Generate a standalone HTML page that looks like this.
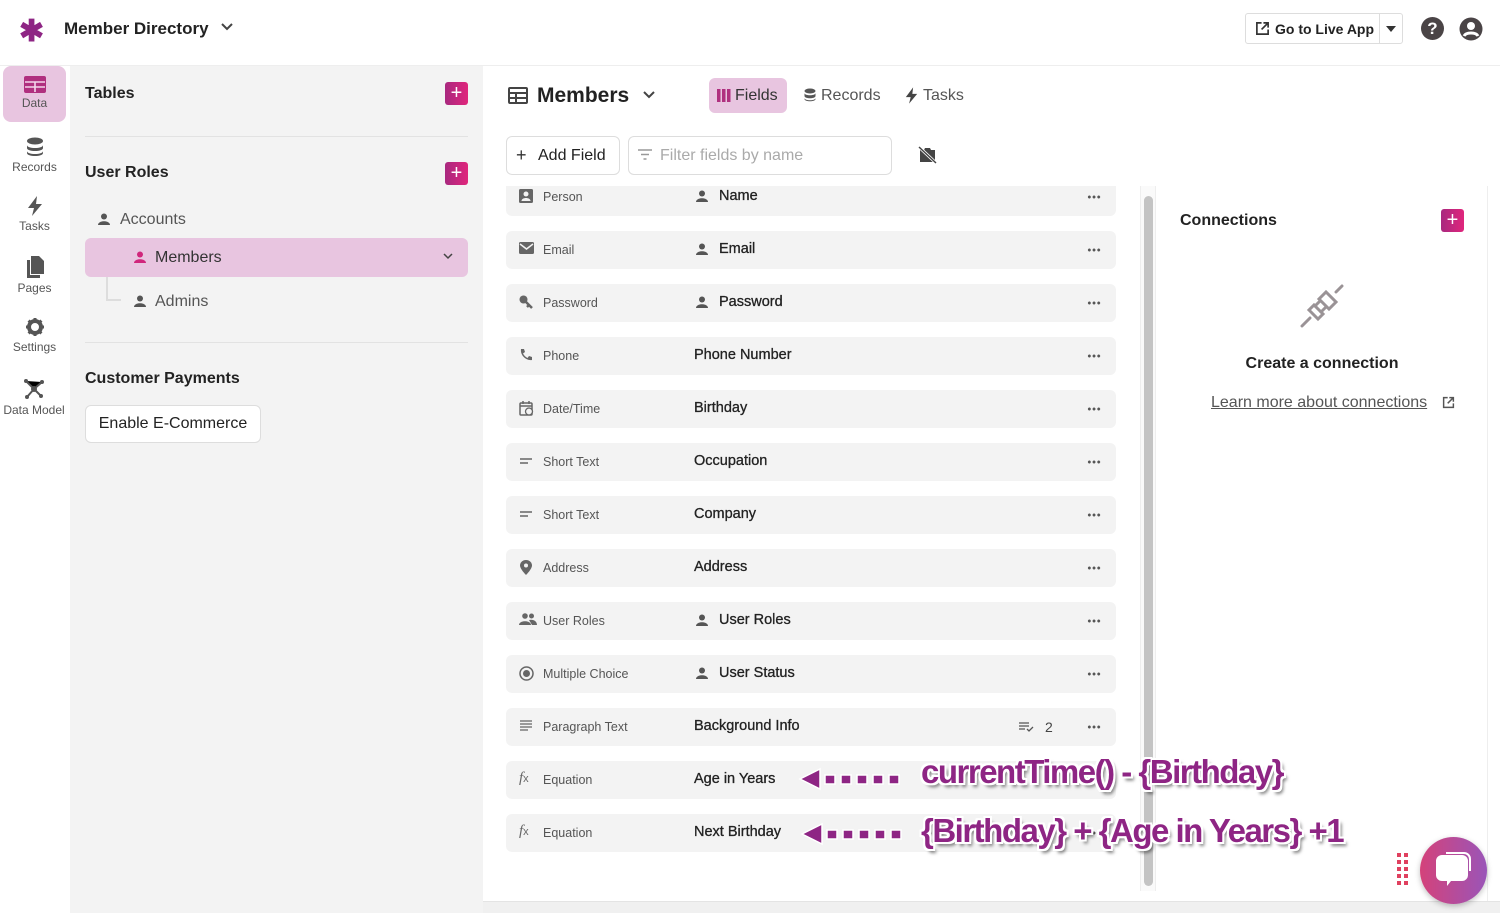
<!DOCTYPE html>
<html><head><meta charset="utf-8"><style>
*{box-sizing:border-box;margin:0;padding:0}
body{width:1500px;height:913px;overflow:hidden;background:#fff;font-family:"Liberation Sans",sans-serif;color:#222;position:relative}
.abs{position:absolute}
.top{left:0;top:0;width:1500px;height:66px;background:#fff;border-bottom:1px solid #eee}
.side{left:0;top:66px;width:70px;height:847px;background:#fff}
.nav{position:absolute;left:3px;width:63px;height:56px;text-align:center;font-size:12px;color:#555}
.nav svg{display:block;margin:10px auto 3px}
.panel{left:70px;top:66px;width:413px;height:847px;background:#f3f3f3}
.plus{position:absolute;width:23px;height:23px;border-radius:3px;background:linear-gradient(90deg,#a8287f,#e0267c);color:#fff;font-size:20px;line-height:22px;text-align:center}
.h{font-size:16px;font-weight:bold;color:#222}
.row{position:absolute;left:506px;width:610px;height:38px;background:#f3f3f3;border-radius:6px}
.row .t{position:absolute;left:37px;top:12px;font-size:12.5px;color:#555}
.row .n{position:absolute;left:188px;top:10px;font-size:14.5px;color:#222;-webkit-text-stroke:0.3px #222}
.row .n.p{left:213px}
.row .ic{position:absolute;left:13px;top:11px}
.row .pi{position:absolute;left:190px;top:12px}
.row .d{position:absolute;left:581px;top:17px;width:14px;height:4px;background:radial-gradient(circle,#555 1.3px,transparent 1.6px) 0 0/4.7px 4px repeat-x}
.ann{position:absolute;font-family:"Liberation Sans Narrow","Liberation Sans",sans-serif;font-weight:bold;font-size:33px;color:#8e2584;text-shadow:-2px -2px 0 #fff,2px -2px 0 #fff,-2px 2px 0 #fff,2px 2px 0 #fff,0 2px 0 #fff,0 -2px 0 #fff,2px 0 0 #fff,-2px 0 0 #fff,3px 4px 3px rgba(0,0,0,.5);white-space:nowrap}
.arrow{position:absolute}
</style></head><body>
<div class="abs top">
  <div class="abs" style="left:19px;top:14px;font-size:30px;color:#8e2584;font-weight:bold">&#10033;</div>
  <div class="abs" style="left:64px;top:19px;font-size:17px;font-weight:bold;color:#222">Member Directory</div>
  <svg class="abs" style="left:220px;top:22px" width="14" height="10" viewBox="0 0 14 10"><path d="M2 2l5 5 5-5" stroke="#444" stroke-width="2" fill="none"/></svg>
  <div class="abs" style="left:1245px;top:13px;width:158px;height:31px;border:1px solid #ddd;border-radius:3px;background:#fff">
    <svg class="abs" style="left:9px;top:7px" width="15" height="15" viewBox="0 0 16 16"><path d="M7 2H2v12h12V9M9 2h5v5M14 2L7 9" stroke="#333" stroke-width="1.8" fill="none"/></svg>
    <div class="abs" style="left:29px;top:7px;font-size:14px;font-weight:bold;color:#222">Go to Live App</div>
    <div class="abs" style="left:133px;top:0;width:1px;height:29px;background:#ddd"></div>
    <div class="abs" style="left:140px;top:12px;border-left:5px solid transparent;border-right:5px solid transparent;border-top:6px solid #333"></div>
  </div>
  <div class="abs" style="left:1421px;top:17px;width:23px;height:23px;border-radius:50%;background:#4a4446;color:#fff;font-weight:bold;font-size:17px;text-align:center;line-height:23px">?</div>
  <svg class="abs" style="left:1459px;top:17px" width="24" height="24" viewBox="0 0 24 24"><circle cx="12" cy="12" r="11.5" fill="#4a4446"/><circle cx="12" cy="9" r="4" fill="#fff"/><path d="M5 19c2-4 12-4 14 0" stroke="#fff" stroke-width="3" fill="none"/></svg>
</div>
<div class="abs side">
  <div class="nav" style="top:0;background:#e8c5e0;border-radius:8px"><svg width="22" height="17" viewBox="0 0 22 17"><rect x="0" y="0" width="22" height="17" rx="2" fill="#b0307f"/><path d="M1 6h20M1 11h20M11 6v10" stroke="#f4d6ec" stroke-width="1.6"/></svg>Data</div>
  <div class="nav" style="top:61px"><svg width="18" height="20" viewBox="0 0 18 20"><ellipse cx="9" cy="4" rx="8" ry="3.5" fill="#555"/><path d="M1 8c0 4 16 4 16 0v3c0 4-16 4-16 0zM1 14c0 4 16 4 16 0v2c0 4-16 4-16 0z" fill="#555"/></svg>Records</div>
  <div class="nav" style="top:120px"><svg width="16" height="20" viewBox="0 0 16 20"><path d="M10 0L1 12h6l-2 8 10-12H9z" fill="#555"/></svg>Tasks</div>
  <div class="nav" style="top:180px"><svg width="18" height="22" viewBox="0 0 18 22"><path d="M5 0h8l5 5v13H5z" fill="#555"/><path d="M1 4h3v15h10v3H1z" fill="#555"/></svg>Pages</div>
  <div class="nav" style="top:241px"><svg width="20" height="20" viewBox="0 0 20 20"><circle cx="10" cy="10" r="6" fill="none" stroke="#555" stroke-width="4"/><path d="M10 1v4M10 15v4M1 10h4M15 10h4M3.6 3.6l3 3M13.4 13.4l3 3M3.6 16.4l3-3M13.4 6.6l3-3" stroke="#555" stroke-width="3"/></svg>Settings</div>
  <div class="nav" style="top:302px;width:64px;left:2px"><svg width="22" height="22" viewBox="0 0 22 22"><path d="M3 3l8 8 8-7M11 11l-7 8M11 11l7 7" stroke="#555" stroke-width="2"/><circle cx="11" cy="11" r="3" fill="#555"/><circle cx="3" cy="3" r="2" fill="#555"/><circle cx="19" cy="4" r="2" fill="#555"/><circle cx="4" cy="19" r="2" fill="#555"/><circle cx="18" cy="18" r="2" fill="#555"/></svg>Data Model</div>
</div>
<div class="abs panel">
  <div class="abs h" style="left:15px;top:19px">Tables</div>
  <div class="plus" style="left:375px;top:16px">+</div>
  <div class="abs" style="left:15px;top:70px;width:383px;height:1px;background:#e2e2e2"></div>
  <div class="abs h" style="left:15px;top:98px">User Roles</div>
  <div class="plus" style="left:375px;top:96px">+</div>
  <svg class="abs" style="left:28px;top:147px" width="12" height="12" viewBox="0 0 12 12"><circle cx="6" cy="3.5" r="3" fill="#555"/><path d="M0 12c0-5 12-5 12 0z" fill="#555"/></svg>
  <div class="abs" style="left:50px;top:145px;font-size:16px;color:#555">Accounts</div>
  <div class="abs" style="left:36px;top:172px;width:2px;height:63px;background:#ddd"></div>
  <div class="abs" style="left:36px;top:233px;width:15px;height:2px;background:#ddd"></div>
  <div class="abs" style="left:15px;top:172px;width:383px;height:39px;background:#e8c5e0;border-radius:6px"></div>
  <svg class="abs" style="left:64px;top:185px" width="12" height="12" viewBox="0 0 12 12"><circle cx="6" cy="3.5" r="3" fill="#d0267c"/><path d="M0 12c0-5 12-5 12 0z" fill="#d0267c"/></svg>
  <div class="abs" style="left:85px;top:183px;font-size:16px;color:#333">Members</div>
  <svg class="abs" style="left:373px;top:187px" width="10" height="7" viewBox="0 0 10 7"><path d="M1 1l4 4 4-4" stroke="#444" stroke-width="1.5" fill="none"/></svg>
  <svg class="abs" style="left:64px;top:229px" width="12" height="12" viewBox="0 0 12 12"><circle cx="6" cy="3.5" r="3" fill="#555"/><path d="M0 12c0-5 12-5 12 0z" fill="#555"/></svg>
  <div class="abs" style="left:85px;top:227px;font-size:16px;color:#555">Admins</div>
  <div class="abs" style="left:15px;top:276px;width:383px;height:1px;background:#e2e2e2"></div>
  <div class="abs h" style="left:15px;top:304px">Customer Payments</div>
  <div class="abs" style="left:15px;top:339px;width:176px;height:38px;border:1px solid #ddd;border-radius:6px;background:#fff;font-size:16px;color:#222;text-align:center;line-height:36px">Enable E-Commerce</div>
</div>
<!-- main header -->
<svg class="abs" style="left:508px;top:87px" width="20" height="17" viewBox="0 0 20 17"><rect x="1" y="1" width="18" height="15" rx="1" fill="none" stroke="#444" stroke-width="2"/><path d="M1 6h18M1 11h18M8 6v10" stroke="#444" stroke-width="2"/></svg>
<div class="abs" style="left:537px;top:84px;font-size:21px;font-weight:bold;color:#222">Members</div>
<svg class="abs" style="left:642px;top:90px" width="14" height="10" viewBox="0 0 14 10"><path d="M2 2l5 5 5-5" stroke="#444" stroke-width="2" fill="none"/></svg>
<div class="abs" style="left:709px;top:78px;width:78px;height:35px;background:#e8c5e0;border-radius:6px"></div>
<svg class="abs" style="left:717px;top:89px" width="14" height="13" viewBox="0 0 14 13"><rect x="0" y="0" width="3.5" height="13" fill="#b0307f"/><rect x="5" y="0" width="3.5" height="13" fill="#b0307f"/><rect x="10" y="0" width="3.5" height="13" fill="#b0307f"/></svg>
<div class="abs" style="left:735px;top:87px;font-size:16px;color:#333">Fields</div>
<svg class="abs" style="left:804px;top:88px" width="12" height="14" viewBox="0 0 12 14"><ellipse cx="6" cy="3" rx="5.5" ry="2.5" fill="#555"/><path d="M.5 5c0 3 11 3 11 0v3c0 3-11 3-11 0zM.5 10c0 3 11 3 11 0v1c0 3-11 3-11 0z" fill="#555"/></svg>
<div class="abs" style="left:821px;top:87px;font-size:16px;color:#555">Records</div>
<svg class="abs" style="left:905px;top:87px" width="13" height="17" viewBox="0 0 16 20"><path d="M10 0L1 12h6l-2 8 10-12H9z" fill="#444"/></svg>
<div class="abs" style="left:923px;top:87px;font-size:16px;color:#555">Tasks</div>
<div class="abs" style="left:506px;top:136px;width:114px;height:39px;border:1px solid #ddd;border-radius:6px;background:#fff"></div>
<div class="abs" style="left:516px;top:145px;font-size:18px;color:#333">+</div>
<div class="abs" style="left:538px;top:147px;font-size:16px;color:#222">Add Field</div>
<div class="abs" style="left:628px;top:136px;width:264px;height:39px;border:1px solid #ddd;border-radius:6px;background:#fff"></div>
<svg class="abs" style="left:638px;top:149px" width="14" height="11" viewBox="0 0 14 11"><path d="M0 1h14M3 5.5h8M5.5 10h3" stroke="#999" stroke-width="1.5"/></svg>
<div class="abs" style="left:660px;top:147px;font-size:16px;color:#aaa">Filter fields by name</div>
<svg class="abs" style="left:918px;top:146px" width="19" height="18" viewBox="0 0 19 18"><path d="M2 4h4l1-2h5l1 2h4v12H2z" fill="#444"/><path d="M1 1l17 16" stroke="#fff" stroke-width="3"/><path d="M1 1l17 16" stroke="#444" stroke-width="1.5"/></svg>
<!-- rows -->
<div class="abs" style="left:483px;top:186px;width:655px;height:715px;overflow:hidden">
<div style="position:relative;left:-483px;top:-186px">
<div class="row" style="top:178px"><svg class="ic" width="14" height="14" viewBox="0 0 14 14"><rect width="14" height="14" rx="1.5" fill="#666"/><circle cx="7" cy="5" r="2.5" fill="#f3f3f3"/><path d="M2.5 12c0-4 9-4 9 0z" fill="#f3f3f3"/></svg><div class="t">Person</div><svg class="pi" width="12" height="12" viewBox="0 0 12 12"><circle cx="6" cy="3.5" r="3" fill="#555"/><path d="M0 12c0-5 12-5 12 0z" fill="#555"/></svg><div class="n p">Name</div><div class="d"></div></div>
<div class="row" style="top:231px"><svg class="ic" width="15" height="12" viewBox="0 0 15 12"><rect width="15" height="12" rx="1.5" fill="#666"/><path d="M1 2l6.5 5 6.5-5" stroke="#f3f3f3" stroke-width="1.5" fill="none"/></svg><div class="t">Email</div><svg class="pi" width="12" height="12" viewBox="0 0 12 12"><circle cx="6" cy="3.5" r="3" fill="#555"/><path d="M0 12c0-5 12-5 12 0z" fill="#555"/></svg><div class="n p">Email</div><div class="d"></div></div>
<div class="row" style="top:284px"><svg class="ic" width="14" height="14" viewBox="0 0 14 14"><circle cx="4.5" cy="4.5" r="4" fill="#666"/><path d="M6 6l7 7M10 10l-2 2" stroke="#666" stroke-width="2.5"/></svg><div class="t">Password</div><svg class="pi" width="12" height="12" viewBox="0 0 12 12"><circle cx="6" cy="3.5" r="3" fill="#555"/><path d="M0 12c0-5 12-5 12 0z" fill="#555"/></svg><div class="n p">Password</div><div class="d"></div></div>
<div class="row" style="top:337px"><svg class="ic" width="14" height="14" viewBox="0 0 14 14"><path d="M2 1l3 0 1 3-2 1.5c1 2 2.5 3.5 4.5 4.5L10 8l3 1v3c-6 1-12-5-11-11z" fill="#666"/></svg><div class="t">Phone</div><div class="n">Phone Number</div><div class="d"></div></div>
<div class="row" style="top:390px"><svg class="ic" width="15" height="15" viewBox="0 0 15 15"><rect x="1" y="2" width="12" height="12" rx="1" fill="none" stroke="#666" stroke-width="1.5"/><path d="M1 5h12M4 0v3M10 0v3" stroke="#666" stroke-width="1.5"/><circle cx="10" cy="10.5" r="3.5" fill="#f3f3f3" stroke="#666" stroke-width="1.3"/></svg><div class="t">Date/Time</div><div class="n">Birthday</div><div class="d"></div></div>
<div class="row" style="top:443px"><svg class="ic" width="14" height="14" viewBox="0 0 14 14"><path d="M1 5h12M1 9h8" stroke="#666" stroke-width="1.5"/></svg><div class="t">Short Text</div><div class="n">Occupation</div><div class="d"></div></div>
<div class="row" style="top:496px"><svg class="ic" width="14" height="14" viewBox="0 0 14 14"><path d="M1 5h12M1 9h8" stroke="#666" stroke-width="1.5"/></svg><div class="t">Short Text</div><div class="n">Company</div><div class="d"></div></div>
<div class="row" style="top:549px"><svg class="ic" width="14" height="15" viewBox="0 0 14 15"><path d="M7 0C3 0 1 3 1 5.5 1 9 7 15 7 15s6-6 6-9.5C13 3 11 0 7 0z" fill="#666"/><circle cx="7" cy="5.5" r="2" fill="#f3f3f3"/></svg><div class="t">Address</div><div class="n">Address</div><div class="d"></div></div>
<div class="row" style="top:602px"><svg class="ic" width="18" height="12" viewBox="0 0 18 12"><circle cx="6" cy="3" r="2.8" fill="#666"/><circle cx="12.5" cy="3" r="2.5" fill="#666"/><path d="M0 12c0-5 12-5 12 0zM10 7c4-1 8 1 8 5h-5z" fill="#666"/></svg><div class="t">User Roles</div><svg class="pi" width="12" height="12" viewBox="0 0 12 12"><circle cx="6" cy="3.5" r="3" fill="#555"/><path d="M0 12c0-5 12-5 12 0z" fill="#555"/></svg><div class="n p">User Roles</div><div class="d"></div></div>
<div class="row" style="top:655px"><svg class="ic" width="15" height="15" viewBox="0 0 15 15"><circle cx="7.5" cy="7.5" r="6.5" fill="none" stroke="#666" stroke-width="1.5"/><circle cx="7.5" cy="7.5" r="3.5" fill="#666"/></svg><div class="t">Multiple Choice</div><svg class="pi" width="12" height="12" viewBox="0 0 12 12"><circle cx="6" cy="3.5" r="3" fill="#555"/><path d="M0 12c0-5 12-5 12 0z" fill="#555"/></svg><div class="n p">User Status</div><div class="d"></div></div>
<div class="row" style="top:708px"><svg class="ic" width="14" height="13" viewBox="0 0 14 13"><path d="M1 2h12M1 5h12M1 8h12M1 11h8" stroke="#666" stroke-width="1.3"/></svg><div class="t">Paragraph Text</div><div class="n">Background Info</div><svg class="abs" style="left:513px;top:13px" width="15" height="12" viewBox="0 0 15 12"><path d="M0 2h10M0 5h10M0 8h6M8 8l2 2 4-4" stroke="#555" stroke-width="1.3" fill="none"/></svg><div class="abs" style="left:539px;top:11px;font-size:14px;color:#444">2</div><div class="d"></div></div>
<div class="row" style="top:761px"><div class="ic" style="top:9px;font-family:'Liberation Serif',serif;font-style:italic;font-size:15px;color:#666">f<span style="font-size:11px;font-style:normal;font-family:'Liberation Sans'">x</span></div><div class="t">Equation</div><div class="n">Age in Years</div><div class="d"></div></div>
<div class="row" style="top:814px"><div class="ic" style="top:9px;font-family:'Liberation Serif',serif;font-style:italic;font-size:15px;color:#666">f<span style="font-size:11px;font-style:normal;font-family:'Liberation Sans'">x</span></div><div class="t">Equation</div><div class="n">Next Birthday</div><div class="d"></div></div>
</div></div>
<!-- scrollbar -->
<div class="abs" style="left:1140px;top:186px;width:16px;height:705px;border-left:1px solid #eee;border-right:1px solid #eee;background:#fafafa"></div>
<div class="abs" style="left:1144px;top:196px;width:9px;height:690px;border-radius:5px;background:#c4c4c4"></div>
<!-- connections panel -->
<div class="abs" style="left:1157px;top:186px;width:331px;height:715px;border-right:1px solid #eee;background:#fff"></div>
<div class="abs h" style="left:1180px;top:212px">Connections</div>
<div class="plus" style="left:1441px;top:209px">+</div>
<svg class="abs" style="left:1300px;top:284px" width="44" height="44" viewBox="0 0 44 44"><g stroke="#9a9396" stroke-width="3" fill="none" stroke-linecap="round"><path d="M2 42l8-8"/><path d="M9 26l9 9 5-5-9-9z"/><path d="M15 22l5-5M21 28l5-5"/><path d="M19 15l10 10 7-7-10-10z"/><path d="M36 8l6-6"/></g></svg>
<div class="abs" style="left:1157px;top:355px;width:330px;text-align:center;font-size:16px;font-weight:bold;color:#222">Create a connection</div>
<div class="abs" style="left:1211px;top:394px;font-size:16px;color:#555;text-decoration:underline">Learn more about connections</div>
<svg class="abs" style="left:1442px;top:396px" width="13" height="13" viewBox="0 0 16 16"><path d="M7 2H2v12h12V9M9 2h5v5M14 2L7 9" stroke="#555" stroke-width="1.8" fill="none"/></svg>
<!-- bottom line -->
<div class="abs" style="left:483px;top:901px;width:1017px;height:12px;background:#f0f0f0;border-top:1px solid #e4e4e4"></div>
<!-- annotations -->
<svg class="arrow" style="left:798px;top:766px" width="106" height="26" viewBox="0 0 106 26"><g fill="#8e2584" stroke="#fff" stroke-width="1.5"><path d="M2 13L22 3v20z"/><rect x="27" y="9" width="10" height="9"/><rect x="43" y="9" width="10" height="9"/><rect x="59" y="9" width="10" height="9"/><rect x="75" y="9" width="10" height="9"/><rect x="91" y="9" width="10" height="9"/></g></svg>
<svg class="arrow" style="left:800px;top:821px" width="106" height="26" viewBox="0 0 106 26"><g fill="#8e2584" stroke="#fff" stroke-width="1.5"><path d="M2 13L22 3v20z"/><rect x="27" y="9" width="10" height="9"/><rect x="43" y="9" width="10" height="9"/><rect x="59" y="9" width="10" height="9"/><rect x="75" y="9" width="10" height="9"/><rect x="91" y="9" width="10" height="9"/></g></svg>
<div class="ann" style="left:921px;top:753px;letter-spacing:-1.5px">currentTime() - {Birthday}</div>
<div class="ann" style="left:921px;top:812px;letter-spacing:-1.5px">{Birthday} + {Age in Years} +1</div>
<!-- chat -->
<svg class="abs" style="left:1396px;top:852px" width="14" height="36" viewBox="0 0 14 36"><g fill="#e0405f"><rect x="1" y="1" width="4" height="4"/><rect x="8" y="1" width="4" height="4"/><rect x="1" y="8" width="4" height="4"/><rect x="8" y="8" width="4" height="4"/><rect x="1" y="15" width="4" height="4"/><rect x="8" y="15" width="4" height="4"/><rect x="1" y="22" width="4" height="4"/><rect x="8" y="22" width="4" height="4"/><rect x="1" y="29" width="4" height="4"/><rect x="8" y="29" width="4" height="4"/></g></svg>
<div class="abs" style="left:1420px;top:837px;width:67px;height:67px;border-radius:50%;background:linear-gradient(90deg,#d4427a,#9a55b8);box-shadow:0 2px 6px rgba(0,0,0,.25)"></div>
<svg class="abs" style="left:1434px;top:851px" width="40" height="40" viewBox="0 0 40 40"><path d="M8 4h20a6 6 0 0 1 6 6v14a6 6 0 0 1-6 6H17l-4 5v-5H8a6 6 0 0 1-6-6V10a6 6 0 0 1 6-6z" fill="#fff"/><path d="M12 2h18a6 6 0 0 1 6 6v12" stroke="#fff" stroke-width="2" fill="none"/></svg>
</body></html>
